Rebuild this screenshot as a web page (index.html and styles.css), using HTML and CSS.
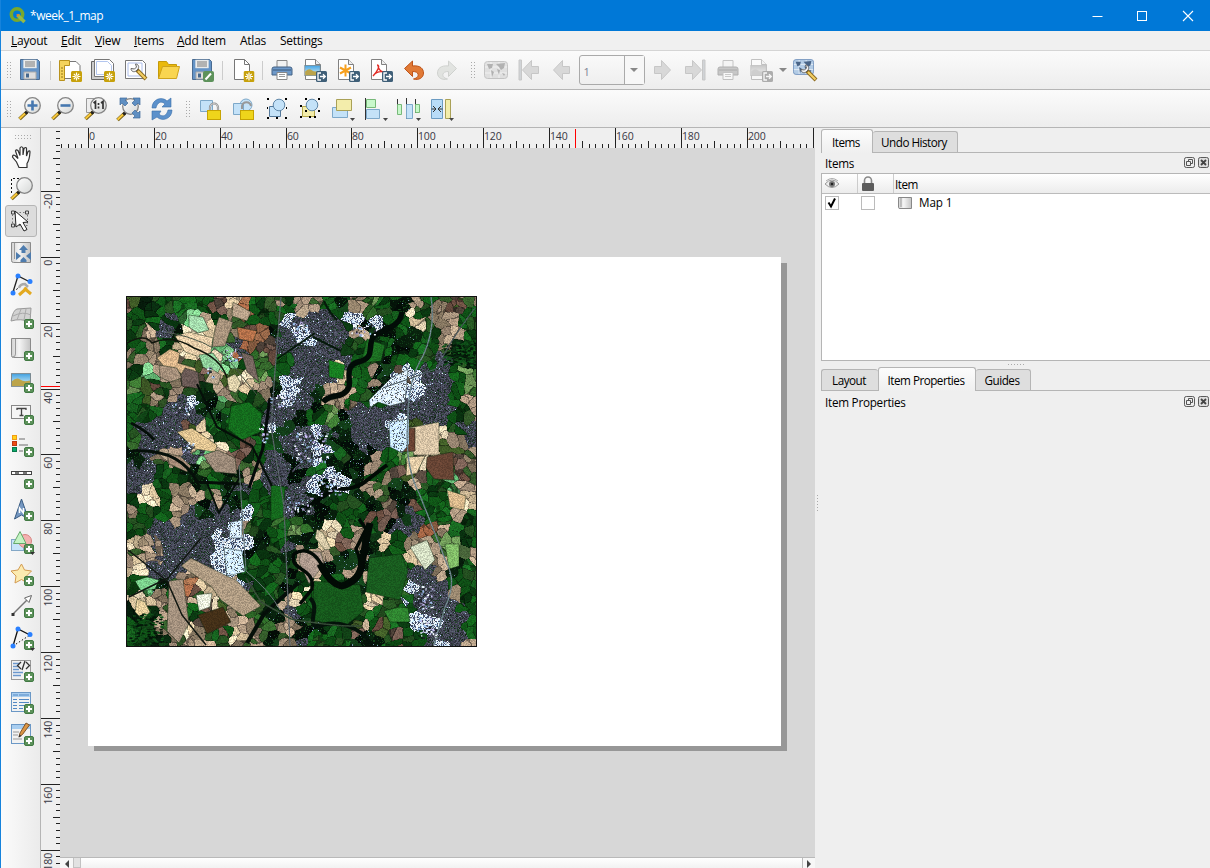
FILE: index.html
```
<!DOCTYPE html>
<html lang="en">
<head>
<meta charset="utf-8">
<title>*week_1_map</title>
<link rel="stylesheet" href="styles.css">
</head>
<body>
<svg class="defs" width="0" height="0">
  <defs>
    <linearGradient id="glass" x1="0" y1="0" x2="1" y2="1"><stop offset="0" stop-color="#fff"/><stop offset="1" stop-color="#d5d7d6"/></linearGradient>
    <linearGradient id="silver" x1="0" y1="0" x2="1" y2="0"><stop offset="0" stop-color="#d2d2d2"/><stop offset=".4" stop-color="#f5f5f5"/><stop offset="1" stop-color="#c4c4c4"/></linearGradient>
    <linearGradient id="sky" x1="0" y1="0" x2="0" y2="1"><stop offset="0" stop-color="#3fa2e4"/><stop offset=".6" stop-color="#a5d5ef"/></linearGradient>
    <symbol id="plus" viewBox="0 0 10 10"><rect x=".5" y=".5" width="9" height="9" rx="1.5" fill="#5d925b" stroke="#417943"/><path d="M5 2v6M2 5h6" stroke="#fff" stroke-width="2"/></symbol>
    <symbol id="star" viewBox="0 0 11 11"><rect width="11" height="11" rx="1.5" fill="#c7a10b"/><path d="M5.5 1.5v8M1.5 5.5h8M2.8 2.8l5.4 5.4M8.2 2.8l-5.4 5.4" stroke="#fff" stroke-width="1.2"/><circle cx="5.5" cy="5.5" r="1.4" fill="#f5df8b"/></symbol>
    <symbol id="export" viewBox="0 0 11 11"><rect width="11" height="11" rx="1.5" fill="#3f5f78"/><path d="M5 2H2v7h3M4 5.500h5M7 3.300l2.300 2.200L7 7.700" fill="none" stroke="#fff" stroke-width="1.300"/></symbol>
    <symbol id="lens" viewBox="0 0 24 24"><path d="M9 15l-7.500 7" stroke="#6c5610" stroke-width="3.600"/><path d="M7 16.500l-5.500 5.200" stroke="#f7c83d" stroke-width="2.200"/><path d="M10 14l-2.500 2.500" stroke="#222" stroke-width="3"/><circle cx="14.500" cy="8.500" r="7.800" fill="url(#glass)" stroke="#858585" stroke-width="1.300"/></symbol>
    <symbol id="page" viewBox="0 0 24 24"><path d="M4.500 1.500h10l5 5v15h-15z" fill="#fff" stroke="#818181"/><path d="M14.500 1.500v5h5" fill="#eee" stroke="#818181"/></symbol>
    <symbol id="wrench" viewBox="0 0 24 24"><path d="M13 12l9 9" stroke="#8b6a1e" stroke-width="4"/><path d="M14 13l7.500 7.500" stroke="#f3ce62" stroke-width="2.200"/><path d="M7 10.500c0 3 3 4 5 2.500l2-2c1.500-2 .5-5-2.500-5l1 3-2 2z" fill="#f4f4f4" stroke="#666"/></symbol>
    <symbol id="printer" viewBox="0 0 24 24"><path d="M7 2.500h10V10H7z" fill="#f2f2f2" stroke="#888"/><path d="M4 9h16q2 0 2 2v6H2v-6q0-2 2-2z" fill="#6e99c9" stroke="#446284"/><path d="M3 12h18" stroke="#385776"/><path d="M7 14.500h10v7H7z" fill="#fff" stroke="#888"/><path d="M9 16.500h6M9 18.500h6" stroke="#999"/></symbol>
    <symbol id="floppy" viewBox="0 0 24 24"><path d="M2.500 1.500h17l2 2v18h-19z" fill="#6594c7" stroke="#496b91"/><path d="M5.500 2h13v8h-13z" fill="#eee" stroke="#d2d8de" stroke-width=".5"/><path d="M7 4h10M7 6h10M7 8h10" stroke="#777"/><path d="M6 14h12v7H6z" fill="#dedede" stroke="#aaa"/><path d="M8 15.500h3v4H8z" fill="#45688f"/></symbol>
    <symbol id="arrow" viewBox="0 0 24 24"><path d="M3.500 12l9-9.500v6h7v7h-7v6z" fill="#cfcfcf" stroke="#b8b8b8"/></symbol>
    <symbol id="padlock" viewBox="0 0 14 18"><path d="M3 9V5.500a4 4 0 018 0V9" fill="none" stroke="#888" stroke-width="2.200"/><path d="M3 9V5.500a4 4 0 018 0V9" fill="none" stroke="#ddd" stroke-width=".8"/><rect x=".5" y="8.500" width="13" height="9" fill="#efd51b" stroke="#c7a403"/></symbol>
    <symbol id="world" viewBox="0 0 24 20"><rect x=".5" y="1.500" width="23" height="17" rx="3" fill="#b3cce6" stroke="#7191bb"/><path d="M1 7h22M1 13h22M7 2v16M15 2v16" stroke="#fff" stroke-width=".7"/><path d="M3 4h6l-1 4-3 1zM7 10l3 2-2 5zM12 4l9-1-1 5-3 2-2-3zM13 9l3 1-1 5zM18 13l3 1-1 2z" fill="#496487"/></symbol>
    <symbol id="photo" viewBox="0 0 22 15"><rect x=".5" y=".5" width="21" height="14" fill="url(#sky)" stroke="#768288"/><path d="M1 9q5-5 9-2t11 1v6H1z" fill="#bca44a"/></symbol>
    <symbol id="float" viewBox="0 0 12 12"><rect x=".5" y=".5" width="10" height="10" rx="1.800" fill="#eee" stroke="#5b5b5b"/><path d="M4.500 4V2.500h4v4H7M2.500 4.500h4v4h-4z" fill="none" stroke="#555"/></symbol>
    <symbol id="cross" viewBox="0 0 12 12"><rect x=".5" y=".5" width="10" height="10" rx="1.800" fill="#ddd" stroke="#5b5b5b"/><path d="M3 3l5 5M8 3L3 8" stroke="#444" stroke-width="1.800"/></symbol>
  </defs>
</svg>
<div class="window">
  <header class="titlebar">
    <svg class="logo" viewBox="0 0 17 17"><circle cx="8" cy="7.500" r="5.700" fill="none" stroke="#77a82e" stroke-width="3.500"/><path d="M8.500 8l7 7" stroke="#97b945" stroke-width="3.500"/><path d="M7.500 7l3.500.5L8 10z" fill="#ef7f20"/></svg>
    <span class="title">*week_1_map</span>
    <svg class="winbtns" viewBox="0 0 138 30"><path d="M20.500 15.500h10" stroke="#fff"/><rect x="65.500" y="10.500" width="9" height="9" fill="none" stroke="#fff"/><path d="M111 10l10 10M121 10l-10 10" stroke="#fff" stroke-width="1.100"/></svg>
  </header>
  <nav class="menubar">
    <span class="m1"><u>L</u>ayout</span><span class="m2"><u>E</u>dit</span><span class="m3"><u>V</u>iew</span><span class="m4"><u>I</u>tems</span><span class="m5"><u>A</u>dd Item</span><span class="m6">Atlas</span><span class="m7">Settings</span>
  </nav>
  <div class="toolbar first">
    <i class="grip"></i>
    <b class="btn"><svg viewBox="0 0 24 24"><use href="#floppy"/></svg></b>
    <i class="sep s7"></i>
    <b class="btn"><svg viewBox="0 0 24 24"><path d="M5 3.500h13l4 4v13H5z" fill="#fff" stroke="#777"/><path d="M1.500 2.500h10v5h-5v15h-5z" fill="#f4d35c" stroke="#b9921c"/><path d="M3 10h2M3 13h2M3 16h2M3 19h2" stroke="#947617"/><use href="#star" x="13" y="13" width="11" height="11"/></svg></b>
    <b class="btn"><svg viewBox="0 0 24 24"><path d="M.5 3.500v18h15v-18z" fill="#ccc" stroke="#666"/><path d="M3.500 1.500h15l4 4v13h-19z" fill="#fff" stroke="#777"/><path d="M5.500 3.500h11l4 4v9h-15z" fill="none" stroke="#b3c6ef"/><use href="#star" x="13" y="13" width="11" height="11"/></svg></b>
    <b class="btn"><svg viewBox="0 0 24 24"><path d="M1.500 2.500h17l3 3v15h-20z" fill="#fff" stroke="#777"/><path d="M4 5h14v13H4z" fill="none" stroke="#aebfeb"/><use href="#wrench" width="24" height="24"/></svg></b>
    <b class="btn"><svg viewBox="0 0 24 24"><path d="M1.500 20.500v-17h8l2 3h8v3" fill="#eab90b" stroke="#c49a0b"/><path d="M1.500 20.500l4-12h17l-3 12z" fill="#f9d550" stroke="#cfa31c"/></svg></b>
    <b class="btn"><svg viewBox="0 0 24 24"><use href="#floppy"/><rect x="13" y="13" width="11" height="11" rx="2" fill="#5d925b"/><path d="M15.500 21.500l5.500-6" stroke="#fff" stroke-width="2"/></svg></b>
    <i class="sep s8"></i>
    <b class="btn"><svg viewBox="0 0 24 24"><path d="M3.500 1.500h10l5 5v15h-15z" fill="#fff" stroke="#777"/><path d="M13.500 1.500v5h5" fill="none" stroke="#777"/><use href="#star" x="12.500" y="13" width="11" height="11"/></svg></b>
    <i class="sep s6"></i>
    <b class="btn"><svg viewBox="0 0 24 24"><use href="#printer"/></svg></b>
    <b class="btn"><svg viewBox="0 0 24 24"><use href="#page" x="-2"/><use href="#photo" x="1" y="7" width="17" height="11"/><use href="#export" x="13" y="13" width="11" height="11"/></svg></b>
    <b class="btn"><svg viewBox="0 0 24 24"><use href="#page" x="-2"/><path d="M9.500 6.500v12M4 9.500l11 6M15 9.500l-11 6" stroke="#f7a01d" stroke-width="2"/><use href="#export" x="13" y="13" width="11" height="11"/></svg></b>
    <b class="btn"><svg viewBox="0 0 24 24"><use href="#page" x="-2"/><path d="M8 7c4 0 0 7-4 11 3-4 7-5 11-4-4 0-6-4-6-7" fill="none" stroke="#e22b24" stroke-width="1.400"/><use href="#export" x="13" y="13" width="11" height="11"/></svg></b>
    <b class="btn"><svg viewBox="0 0 24 24"><path d="M2.500 10.500l8-7.500v5c8-1 11 3 11 7 0 5-5 7.500-10 6 4-1 5-3 4.500-5-.5-1.500-2-2.500-5.500-2.500v5z" fill="#e17a36" stroke="#be541a"/></svg></b>
    <b class="btn"><svg class="dim" viewBox="0 0 24 24"><path d="M21.500 10.500l-8-7.500v5c-8-1-11 3-11 7 0 5 5 7.500 10 6-4-1-5-3-4.500-5 .5-1.500 2-2.500 5.500-2.500v5z" fill="#ccd0ca" stroke="#a3a8a2"/></svg></b>
    <i class="grip wide"></i>
    <b class="btn"><svg class="dim gray" viewBox="0 0 24 24"><use href="#world" y="2" width="24" height="20"/></svg></b>
    <b class="btn"><svg class="pale" viewBox="0 0 24 24"><path d="M2 2h2.500v20H2z" fill="#c5c9cd" stroke="#b9b9b9"/><use href="#arrow" x="2"/></svg></b>
    <b class="btn"><svg class="pale" viewBox="0 0 24 24"><use href="#arrow"/></svg></b>
    <div class="combo"><span>1</span><em></em></div>
    <b class="btn"><svg class="pale flip" viewBox="0 0 24 24"><use href="#arrow"/></svg></b>
    <b class="btn"><svg class="pale flip" viewBox="0 0 24 24"><path d="M2 2h2.500v20H2z" fill="#c5c9cd" stroke="#b9b9b9"/><use href="#arrow" x="2"/></svg></b>
    <b class="btn"><svg class="dim gray" viewBox="0 0 24 24"><use href="#printer"/></svg></b>
    <b class="btn"><svg class="dim gray" viewBox="0 0 24 24"><use href="#page" x="-2"/><use href="#photo" x="1" y="7" width="17" height="11"/><use href="#export" x="13" y="13" width="11" height="11"/></svg></b>
    <i class="drop"></i>
    <b class="btn"><svg viewBox="0 0 24 24"><use href="#world" y="0" width="21" height="18"/><use href="#wrench" x="1" y="1" width="24" height="24"/></svg></b>
  </div>
  <div class="toolbar second">
    <i class="grip"></i>
    <b class="btn"><svg viewBox="0 0 24 24"><use href="#lens"/><path d="M14.500 3.500v10M9.500 8.500h10" stroke="#4678b0" stroke-width="2.600"/></svg></b>
    <b class="btn"><svg viewBox="0 0 24 24"><use href="#lens"/><path d="M9.500 8.500h10" stroke="#4678b0" stroke-width="2.600"/></svg></b>
    <b class="btn"><svg viewBox="0 0 24 24"><path d="M2.500 1.500h12v14h-12z" fill="#eee" stroke="#999"/><use href="#lens"/><path d="M9.500 6l2-1.500V12M17 6l2-1.500V12M14.500 6v2M14.500 9.500v2" fill="none" stroke="#333" stroke-width="1.700"/></svg></b>
    <b class="btn"><svg viewBox="0 0 24 24"><use href="#lens" x="-1" y="1"/><path d="M3 1h7L8 3l3 3-3 3-3-3-2 2zM23 1v7l-2-2-3 3-3-3 3-3-2-2zM23 21v-7l-2 2-3-3-3 3 3 3-2 2z" fill="#5f8fc2" stroke="#416b9c" stroke-width=".7"/></svg></b>
    <b class="btn"><svg viewBox="0 0 24 24"><path d="M2 11c0-9 10-12 15-7l4-3v9h-9l3-3c-4-4-8-1-9 4z" fill="#5c91cb" stroke="#3a6ea9" stroke-width=".6"/><path d="M22 13c0 9-10 12-15 7l-5 3v-9h9l-2 3c4 4 8 1 9-4z" fill="#5c91cb" stroke="#3a6ea9" stroke-width=".6"/></svg></b>
    <i class="grip wide"></i>
    <b class="btn"><svg viewBox="0 0 24 24"><path d="M1.500 3.500h12v11h-12z" fill="#c4e2f8" stroke="#7da8c9"/><use href="#padlock" x="8" y="5" width="14" height="18"/></svg></b>
    <b class="btn"><svg viewBox="0 0 24 24"><circle cx="14" cy="8" r="6" fill="#c4e2f8" stroke="#7da8c9"/><path d="M1.500 6.500h10v11h-10z" fill="#c4e2f8" stroke="#7da8c9"/><path d="M10 12V9c1-5 8-5 9 0" fill="none" stroke="#999" stroke-width="2"/><rect x="8.500" y="13.500" width="13" height="9" fill="#efd51b" stroke="#c7a403"/></svg></b>
    <b class="btn"><svg viewBox="0 0 24 24"><path d="M4.500 9.500h11v10h-11z" fill="#c4e2f8" stroke="#54799b"/><circle cx="14" cy="8" r="5.800" fill="#c4e2f8" stroke="#6087a8"/><path d="M2 2h2M20 2h2M2 21h2M11 21h2M20 21h2M2 11h1M21 11h1" stroke="#000" stroke-width="2"/></svg></b>
    <b class="btn"><svg viewBox="0 0 24 24"><path d="M4.500 9.500h12v10h-12z" fill="#f3edab" stroke="#b5a94c"/><circle cx="14" cy="8" r="5.800" fill="#c4e2f8" stroke="#6087a8"/><path d="M7 2h2M20 2h2M2 9h2M2 20h2M11 20h2M20 14h2M7 14h2M16 20h2" stroke="#000" stroke-width="2"/></svg></b>
    <b class="btn"><svg viewBox="0 0 24 24"><path d="M1.500 10.500h15v10h-15z" fill="#c4e2f8" stroke="#7da8c9"/><path d="M5.500 2.500h15v11h-15z" fill="#f3edab" stroke="#aaa157"/><path d="M19 21h5l-2.500 3z" fill="#444"/></svg></b>
    <b class="btn"><svg viewBox="0 0 24 24"><path d="M1.500 1v22" stroke="#333"/><path d="M2.500 2.500h9v8h-9z" fill="#c8f8cb" stroke="#78b97a"/><path d="M2.500 12.500h13v9h-13z" fill="#c4e2f8" stroke="#7da8c9"/><path d="M19 21h5l-2.500 3z" fill="#444"/></svg></b>
    <b class="btn"><svg viewBox="0 0 24 24"><path d="M.5 2v14M9.500 1v21M18.500 2v14" stroke="#333"/><path d="M.5 7.500h4v10h-4zM18.500 7.500h4v8h-4z" fill="#c8f8cb" stroke="#78b97a"/><path d="M9.500 7.500h6v14h-6z" fill="#c4e2f8" stroke="#7da8c9"/><path d="M19 21h5l-2.500 3z" fill="#444"/></svg></b>
    <b class="btn"><svg viewBox="0 0 24 24"><path d="M1.500 2.500h11v19h-11z" fill="#b8dcf8" stroke="#6b9bc2"/><path d="M15.500 2.500h5v19h-5z" fill="#f3edab" stroke="#aaa157"/><path d="M1.500 12h4M3 9l3 3-3 3M12.500 12h-4M11 9l-3 3 3 3" fill="none" stroke="#333"/><path d="M19 21h5l-2.500 3z" fill="#444"/></svg></b>
  </div>
  <main class="work">
    <aside class="tools">
      <i class="hgrip"></i>
      <b class="tool"><svg viewBox="0 0 24 24"><path d="M9 22.500L6.500 17 2.500 12q0-2.500 2.500-1.500l3 3L5.500 6q.5-2 2.500-.5l2 5V3q1.500-2.500 3 0v7l1-6.500q2-2 2.500 0V11l1.500-4.500q2-1.500 2 .5-.5 8-3 11.500v4z" fill="#fff" stroke="#333" stroke-width="1.200"/></svg></b>
      <b class="tool"><svg viewBox="0 0 24 24"><path d="M1.500 16V1.500H17" fill="none" stroke="#111" stroke-dasharray="2 2"/><use href="#lens"/></svg></b>
      <b class="tool active"><svg viewBox="0 0 24 24"><path d="M2.500 3.500h15v13h-15z" fill="none" stroke="#777" stroke-dasharray="1.500 2"/><path d="M1.500 2h3v3h-3zM15.500 2h3v3h-3zM1.500 15h3v3h-3z" fill="#ddd" stroke="#444"/><path d="M5 2l1 16 4-3 4 7 3-1.500-4-7 5-.5z" fill="#fff" stroke="#222"/></svg></b>
      <b class="tool"><svg viewBox="0 0 24 24"><path d="M1.500 1.500h19v20h-17q-2 0-2-2z" fill="url(#silver)" stroke="#8b8b8b"/><path d="M4.500 2v16" stroke="#999"/><path d="M13.500 4l4.500 5h-2.500v3h-4V9H9zM6 11l5 4-5 4zM21 11l-5 4 5 4zM13.500 16l3 3v2h-6v-2z" fill="#4e7cae"/></svg></b>
      <b class="tool"><svg viewBox="0 0 24 24"><path d="M3 19L8 3l12 6" fill="none" stroke="#222" stroke-width="1.300"/><path d="M3 19l8-6" stroke="#222" stroke-dasharray="2 2"/><path d="M9 22l8-7M14 15l7 6" stroke="#e3a920" stroke-width="3"/><path d="M9 15q1-4 6-4l3 3" fill="none" stroke="#aaa" stroke-width="2.500"/><circle cx="8" cy="3" r="2.500" fill="#2a80ff"/><circle cx="20" cy="8.500" r="2.500" fill="#2a80ff"/><circle cx="3" cy="20" r="2.500" fill="#2a80ff"/></svg></b>
      <b class="tool"><svg viewBox="0 0 24 24"><path d="M1 16q2-11 6-12l14-1-1 14q-9-4-19-1z" fill="#d2d2d2" stroke="#999"/><path d="M3 11q10-5 18-1M7 15l4-11M14 15l2-11" fill="none" stroke="#aaa"/><use href="#plus" x="14" y="14" width="10" height="10"/></svg></b>
      <b class="tool"><svg viewBox="0 0 24 24"><path d="M1.500 1.500h19v19h-17q-2 0-2-2z" fill="url(#silver)" stroke="#8b8b8b"/><path d="M5.500 2v15q0 3-3 3" fill="none" stroke="#999"/><use href="#plus" x="14" y="14" width="10" height="10"/></svg></b>
      <b class="tool"><svg viewBox="0 0 24 24"><use href="#photo" x="1" y="4" width="20" height="14"/><use href="#plus" x="14" y="14" width="10" height="10"/></svg></b>
      <b class="tool"><svg viewBox="0 0 24 24"><rect x="1.500" y="4.500" width="19" height="13" fill="#f6f6f6" stroke="#888"/><path d="M7 9V7.500h9V9M11.500 7.500v7M9.500 14.500h4" fill="none" stroke="#444" stroke-width="1.300"/><use href="#plus" x="14" y="14" width="10" height="10"/></svg></b>
      <b class="tool"><svg viewBox="0 0 24 24"><rect x="2.500" y="2.500" width="4" height="4" fill="#ffd31a" stroke="#f19b13"/><rect x="2.500" y="8.500" width="4" height="4" fill="#ef4c16" stroke="#bc3913"/><rect x="2.500" y="14.500" width="4" height="4" fill="#09a86c" stroke="#087849"/><path d="M9 6h6M9 12h9M9 18h4" stroke="#999" stroke-width="1.500"/><use href="#plus" x="14" y="14" width="10" height="10"/></svg></b>
      <b class="tool"><svg viewBox="0 0 24 24"><rect x="1.500" y="6.500" width="20" height="3" fill="#fff" stroke="#444"/><path d="M5 8h4M13 8h4" stroke="#777" stroke-width="2"/><use href="#plus" x="14" y="14" width="10" height="10"/></svg></b>
      <b class="tool"><svg viewBox="0 0 24 24"><path d="M11.500 1l7 20-7-4-7 4z" fill="#7598c2" stroke="#385b82"/><path d="M9.500 15v-5l4 5v-5" stroke="#fff" fill="none" stroke-width="1.500"/><use href="#plus" x="14" y="13" width="10" height="10"/></svg></b>
      <b class="tool"><svg viewBox="0 0 24 24"><rect x="1.500" y="9.500" width="12" height="11" fill="#c8e4f9" stroke="#84a8c7"/><circle cx="15" cy="11" r="6.500" fill="#f3b2b1" stroke="#d78380"/><path d="M10 1.500l6 12H3.500z" fill="#c4f4c4" stroke="#67a96b"/><use href="#plus" x="14" y="14" width="10" height="10"/><path d="M20 22h5l-2.500 3z" fill="#333"/></svg></b>
      <b class="tool"><svg viewBox="0 0 24 24"><path d="M11.500 2l3 6 7 1-5 5 1 7-6-3.500L5 21l1-7-5-5 7-1z" fill="#fcebb0" stroke="#d39b51"/><use href="#plus" x="14" y="14" width="10" height="10"/></svg></b>
      <b class="tool"><svg viewBox="0 0 24 24"><path d="M3 20L18 5" stroke="#777" stroke-width="1.400"/><path d="M21.500 1.500l-7 2.500 4.500 4.500z" fill="#fff" stroke="#666"/><path d="M1.500 19h3v3h-3z" fill="#333"/><use href="#plus" x="14" y="14" width="10" height="10"/></svg></b>
      <b class="tool"><svg viewBox="0 0 24 24"><path d="M3 20L8 3l12 6" fill="none" stroke="#111" stroke-width="1.300"/><path d="M3 20L20 9" stroke="#111" stroke-dasharray="1.500 2"/><circle cx="8" cy="3" r="2.500" fill="#2a80ff"/><circle cx="20" cy="8.500" r="2.500" fill="#2a80ff"/><circle cx="3" cy="20" r="2.500" fill="#2a80ff"/><use href="#plus" x="14" y="14" width="10" height="10"/><path d="M20 22h5l-2.500 3z" fill="#333"/></svg></b>
      <b class="tool"><svg viewBox="0 0 24 24"><rect x="1.500" y="2.500" width="19" height="19" fill="#f2f2f2" stroke="#999"/><path d="M3 5.500h7M3 8.500h5M3 11.500h6M3 14.500h10M3 17.500h8" stroke="#6b98cd" stroke-width="1.500"/><path d="M11 4L7.500 7.500 11 11M16 4l3.500 3.500L16 11M15 3l-3 9" fill="none" stroke="#333" stroke-width="1.300"/><use href="#plus" x="14" y="14" width="10" height="10"/></svg></b>
      <b class="tool"><svg viewBox="0 0 24 24"><rect x="1.500" y="2.500" width="19" height="19" fill="#f2f2f2" stroke="#6b98c6"/><path d="M2 5h18" stroke="#a9cef0" stroke-width="4"/><path d="M3 5h5M9 5h10M3 9.500h4M9 9.500h10M3 12.500h4M9 12.500h10M3 15.500h4M9 15.500h8M3 18.500h4M9 18.500h4" stroke="#5389c4"/><use href="#plus" x="14" y="14" width="10" height="10"/></svg></b>
      <b class="tool"><svg viewBox="0 0 24 24"><rect x="1.500" y="2.500" width="19" height="19" fill="#f2f2f2" stroke="#6b98c6"/><path d="M2 5h18" stroke="#a9cef0" stroke-width="4"/><path d="M3 10h6M3 13h5M3 17h9" stroke="#999"/><path d="M9 15l1-4 6-10 3.500 2-7 9.500z" fill="#db9544" stroke="#80552a"/><path d="M8.500 15.500l1-3 2 1.500z" fill="#333"/><use href="#plus" x="14" y="14" width="10" height="10"/></svg></b>
    </aside>
    <div class="vruler"><svg id="vruler" width="19" height="740"></svg></div>
    <section class="view">
      <svg id="hruler" class="hruler" width="755" height="20"></svg>
      <div class="scene"><div class="sheet"><canvas id="map" class="map" width="349" height="349"></canvas></div></div>
      <div class="scroll"><i class="arr left"></i><i class="thumb"></i><i class="arr right"></i></div>
    </section>
    <i class="splitter"></i>
    <section class="docks">
      <div class="tabs top"><span class="tab on t-items">Items</span><span class="tab t-undo">Undo History</span></div>
      <div class="dockhead"><span>Items</span><svg viewBox="0 0 12 12"><use href="#float"/></svg><svg viewBox="0 0 12 12"><use href="#cross"/></svg></div>
      <div class="tree">
        <div class="thead">
          <span class="c1"><svg width="16" height="12" viewBox="0 0 16 12"><path d="M1 6q7-8 14 0-7 7-14 0z" fill="#eee" stroke="#999"/><circle cx="8" cy="6" r="3" fill="#777"/><circle cx="8" cy="6" r="1.300" fill="#222"/><path d="M2 3q6-5 12 0" fill="none" stroke="#aaa"/></svg></span>
          <span class="c2"><svg width="12" height="15" viewBox="0 0 12 15"><path d="M2.500 8V4.500a3.500 3.500 0 017 0V8" fill="none" stroke="#888" stroke-width="1.600"/><rect y="7" width="12" height="8" rx="1" fill="#5c5c5c"/></svg></span>
          <span class="c3">Item</span>
        </div>
        <div class="trow"><span class="check"><svg width="12" height="12" viewBox="0 0 12 12"><path d="M2.500 5.500l2.500 4 4-8" fill="none" stroke="#000" stroke-width="2"/></svg></span><span class="check second-check"></span><svg class="mapicon" viewBox="0 0 14 12"><path d="M.5.500h13v11H2q-1.500 0-1.500-1z" fill="url(#silver)" stroke="#888"/><path d="M3 1v9" stroke="#999"/></svg><span class="name">Map 1</span></div>
      </div>
      <div class="hsplit"><i></i></div>
      <div class="tabs bottom"><span class="tab t-layout">Layout</span><span class="tab on t-props">Item Properties</span><span class="tab t-guides">Guides</span></div>
      <div class="dockhead props"><span>Item Properties</span><svg viewBox="0 0 12 12"><use href="#float"/></svg><svg viewBox="0 0 12 12"><use href="#cross"/></svg></div>
    </section>
  </main>
</div>
<script src="map.js"></script>
</body>
</html>
```
FILE: styles.css
```
* { box-sizing: border-box; }
body { margin: 0; overflow: hidden; font: 12px "Open Sans", "Noto Sans", sans-serif; letter-spacing: -0.25px; color: #000; }
.defs { position: absolute; }
.window { width: 1210px; height: 868px; display: flex; flex-direction: column; background: #efefef; border-left: 1px solid #1683dc; }
.titlebar { height: 31px; flex: none; display: flex; align-items: center; background: #0078d7; color: #fff; padding-left: 8px; }
.logo { width: 17px; height: 17px; }
.title { margin-left: 4px; flex: 1; letter-spacing: -0.45px; }
.winbtns { width: 138px; height: 30px; flex: none; }
.menubar { height: 20px; flex: none; display: flex; align-items: center; padding-left: 10px; border-bottom: 1px solid #d5d5d5; background: #f0f0f0; white-space: nowrap; }
.menubar u { text-underline-offset: 1px; }
.m1 { width: 50px; } .m2 { width: 34px; } .m3 { width: 39px; } .m4 { width: 43px; } .m5 { width: 63px; } .m6 { width: 40px; }
.toolbar { flex: none; display: flex; align-items: center; padding-left: 5px; background: linear-gradient(#fbfbfb, #ededed); border-bottom: 1px solid #b5b5b5; }
.first { height: 39px; }
.second { height: 38px; }
.grip { width: 7.500px; height: 18px; flex: none; background: radial-gradient(circle, #aaa 0.700px, transparent 0.900px) 0 0 / 3px 3px repeat; clip-path: inset(0 2px 0 0); }
.grip.wide { width: 6px; margin: 0 4px 0 6px; clip-path: none; }
.btn { width: 33px; height: 24px; flex: none; display: flex; justify-content: center; }
.btn svg, .tool svg { width: 24px; height: 24px; overflow: visible; display: block; }
.btn svg { width: 24px; height: 24px; margin-left: -1px; }
.dim { opacity: .45; }
.pale { opacity: .75; }
.gray { filter: grayscale(1); }
.flip { transform: scaleX(-1); }
.sep { height: 19px; flex: none; background: linear-gradient(#ccc, #ccc) center / 1px 100% no-repeat; }
.s7 { width: 7px; } .s8 { width: 8px; } .s6 { width: 6px; }
.combo { width: 66px; height: 30px; margin-right: 1px; flex: none; display: flex; border: 1px solid #aaa; border-radius: 3px; color: #7b8192; align-items: center; font-size: 11px; }
.combo span { flex: 1; padding: 2px 0 0 4px; }
.combo em { width: 20px; height: 28px; border-left: 1px solid #aaa; display: flex; justify-content: center; align-items: center; background: #f7f7f7; }
.combo em::after, .drop::after { content: ""; border: 4px solid transparent; border-top-color: #888; border-bottom: 0; }
.drop { width: 11px; flex: none; display: flex; justify-content: center; }
.work { flex: 1; min-height: 0; display: flex; }
.tools { width: 40px; flex: none; background: linear-gradient(90deg, #fbfbfb, #ebebeb); border-right: 1px solid #b5b5b5; padding: 6px 0 0 4px; overflow: hidden; }
.hgrip { display: block; width: 18px; height: 6px; margin: 0 0 1px 9px; background: radial-gradient(circle, #aaa 0.700px, transparent 0.900px) 0 0 / 3px 3px; }
.tool { width: 32px; height: 32px; margin-bottom: 0.060px; display: flex; justify-content: center; align-items: center; }
.tool svg { margin-left: 1px; }
.tool.active { background: #dcdcdc; border: 1px solid #b5b5b5; border-radius: 3px; }
.vruler { width: 19px; flex: none; background: #efefef; overflow: hidden; }
.vruler svg { display: block; }
.view { width: 755px; flex: none; display: flex; flex-direction: column; }
.hruler { display: block; flex: none; background: #efefef; }
.tick { stroke: #222; stroke-width: 1; shape-rendering: crispEdges; }
.mark { stroke: #f00; stroke-width: 1; shape-rendering: crispEdges; }
.num { font: 10.500px "Open Sans", sans-serif; fill: #383844; letter-spacing: -0.150px; }
.scene { position: relative; flex: 1; background: #d7d7d7; overflow: hidden; }
.sheet { position: absolute; left: 28px; top: 109px; width: 693px; height: 489px; background: #fff; box-shadow: 6px 5px 0 #979797; }
.sheet::after { content: ""; position: absolute; right: -6px; top: 0; width: 6px; height: 6px; background: #d7d7d7; }
.map { position: absolute; left: 38px; top: 39px; width: 351px; height: 351px; border: 1px solid #111; }
.scroll { height: 11px; flex: none; display: flex; background: linear-gradient(#fff, #f2f2f2); border-top: 1px solid #b9b9b9; }
.arr { width: 13px; display: flex; align-items: center; justify-content: center; background: #f7f7f7; }
.arr::after { content: ""; margin-top: 2px; border: 4px solid transparent; }
.left::after { border-right-color: #444; border-left: 0; }
.right { margin-left: auto; border-left: 1px solid #bbb; }
.right::after { border-left-color: #444; border-right: 0; }
.thumb { width: 8px; background: #e2e2e2; border: 1px solid #c2c2c2; border-top: 0; }
.splitter { width: 6px; flex: none; background: radial-gradient(circle, #aaa 0.700px, transparent 0.900px) 1px 366px / 3px 3px; clip-path: inset(366px 2px 356px 1px); }
.docks { flex: 1; min-width: 0; display: flex; flex-direction: column; letter-spacing: -0.5px; font-size: 11.700px; }
.tabs { display: flex; align-items: flex-end; flex: none; border-bottom: 1px solid #b5b5b5; }
.top { height: 25px; }
.tab { display: flex; align-items: center; justify-content: center; height: 21px; padding-right: 2px; background: #dedede; border: 1px solid #b5b5b5; border-bottom: 0; border-radius: 3px 3px 0 0; white-space: nowrap; }
.tab + .tab { border-left: 0; }
.tab.on { height: 24px; margin-bottom: -1px; background: linear-gradient(#fcfcfc, #efefef); border-left: 1px solid #b5b5b5; }
.t-items { width: 52px; } .t-undo { width: 85px; } .t-layout { width: 57px; border-right: 0; } .t-props { width: 98px; } .t-guides { width: 55px; }
.dockhead { height: 20px; flex: none; display: flex; align-items: center; padding-left: 4px; gap: 2px; }
.dockhead span { flex: 1; letter-spacing: -0.250px; }
.dockhead svg { width: 12px; height: 12px; }
.tree { height: 188px; flex: none; background: #fff; border: 1px solid #b5b5b5; border-right: 0; }
.thead { height: 20px; display: flex; background: linear-gradient(#fff, #ececec); border-bottom: 1px solid #bbb; }
.thead span { display: flex; align-items: center; }
.c1 { width: 36px; padding-left: 2px; border-right: 1px solid #ccc; }
.c2 { width: 36px; padding-left: 4px; border-right: 1px solid #ccc; }
.c3 { padding-left: 1px; }
.trow { display: flex; align-items: center; height: 18px; padding-left: 3px; letter-spacing: 0; }
.name { padding-bottom: 2px; letter-spacing: -0.1px; }
.check { width: 14px; height: 14px; border: 1px solid #bbb; display: block; background: #fff; }
.check svg { display: block; }
.second-check { margin-left: 22px; }
.mapicon { width: 14px; height: 12px; margin: 0 7px 0 23px; }
.hsplit { height: 6px; display: flex; justify-content: center; align-items: center; }
.hsplit i { width: 18px; height: 3px; background: radial-gradient(circle, #aaa 0.700px, transparent 0.900px) 0 0 / 3px 3px; }
.bottom { height: 24px; }
.props { height: 22px; }
```
FILE: map.js
```
const NS = 'http://www.w3.org/2000/svg';

function add(svg, name, attrs, text) {
  const el = document.createElementNS(NS, name);
  for (const k in attrs) el.setAttribute(k, attrs[k]);
  if (text !== undefined) el.textContent = text;
  svg.appendChild(el);
}

// Rulers: a tick every 2 mm, medium at 10 mm, long with a number at 20 mm
function ruler(id, origin, length, vertical, mark) {
  const svg = document.getElementById(id);
  const scale = 3.295;
  for (let mm = -60; mm <= 240; mm += 2) {
    const p = Math.floor(origin + mm * scale) + 0.5;
    if (p < 0 || p > length) continue;
    const len = mm % 20 === 0 ? 20 : mm % 10 === 0 ? 7 : 4;
    const edge = vertical ? 19 : 20;
    if (vertical) add(svg, 'line', { x1: edge - len, x2: edge, y1: p, y2: p, class: 'tick' });
    else add(svg, 'line', { x1: p, x2: p, y1: edge - len, y2: edge, class: 'tick' });
    if (mm % 20 === 0 && mm <= 200) {
      if (vertical) add(svg, 'text', { class: 'num', 'text-anchor': 'end', transform: `translate(11 ${p + 2.5}) rotate(-90)` }, mm);
      else add(svg, 'text', { class: 'num', x: p + 0.5, y: 12 }, mm);
    }
  }
  if (vertical) add(svg, 'line', { x1: 0, x2: 19, y1: mark, y2: mark, class: 'mark' });
  else add(svg, 'line', { x1: mark, x2: mark, y1: 1, y2: 20, class: 'mark' });
}
ruler('hruler', 28.3, 755, false, 515.5);
ruler('vruler', 129.2, 740, true, 258.5);

// Land cover: one letter per 14 px block, north at the top
const cover = [
  'bdggggbcogtgttgktlgktgtbt', 'gggumtgtoggwuuugwwggcgttg', 'gtukccttbokuwuuutkkgkgttg',
  'gtgcccmuobbuuuudgggkggtdg', 'tgtttbcmglbguuuuggkgggudd', 'gmttbbcbclgwuuucgtkbwuugl',
  'lbgtgdttctkwukttgkkwwuugl', 'gbtuwkmggguwukttgguuucugt', 'gguuukkggguukglkuuuwuuugt',
  'guuubcgggkwkuwukuuuwbccgu', 'luuuuccgbgkuuwkkkuuwcbbtu', 'kuttumtbdgukuwkgktgltcbbt',
  'uuggklgkttuukgwkkggbbgtbt', 'uugttkgkuguuuwkwkttktggmt', 'gcgttttkggguukgggktkbggcc',
  'tggtukuuwggukkkggbbkuggtg', 'gguuuuuwtglulkcgtgkuuotgg', 'ctuuuuwwwkgukkcbtkcgttllg',
  'ttuuuuwwkgkktttktkggcttlt', 'ctuutuwwgggdttkktkgguutkg', 'gmktocctuggkgcggkcglwuugg',
  'cctgbtcttggtcggggctgwuutg', 'ddttgbbtltkuggqkggggwuuug', 'gdttcbbgtlktkkgdbtbgwwuug',
  'ggdtttgcttktugggkkgbguwut'
];
const tones = {
  g: [[14, 78, 21], [18, 96, 26], [10, 56, 17], [24, 104, 33], [37, 82, 33], [14, 78, 21]],
  d: [[9, 43, 16], [16, 62, 21], [6, 28, 12]],
  k: [[3, 12, 7], [8, 32, 13], [5, 20, 9], [18, 62, 25]],
  t: [[164, 143, 122], [181, 160, 135], [137, 121, 99], [187, 163, 138], [52, 92, 42]],
  c: [[226, 204, 165], [205, 184, 149], [239, 222, 188]],
  b: [[106, 78, 65], [126, 99, 87], [83, 70, 60], [63, 90, 38]],
  o: [[176, 109, 74], [190, 128, 89], [145, 99, 70]],
  l: [[60, 118, 50], [109, 151, 87], [44, 100, 38]],
  m: [[103, 189, 119], [130, 207, 142], [48, 108, 52]],
  q: [[18, 82, 24]],
  u: [[70, 73, 88]], w: [[184, 210, 238]]
};
let seed = 71;
function rnd() {
  seed = (seed * 1664525 + 1013904223) >>> 0;
  return seed / 4294967296;
}

const size = 349;
const ctx = document.getElementById('map').getContext('2d');
const img = ctx.createImageData(size, size);
const step = 8.5;
const cols = Math.ceil(size / step) + 4;
const seeds = [];
for (let j = 0; j < cols; j++) for (let i = 0; i < cols; i++) {
  const x = (i - 2 + rnd() * 1.3) * step, y = (j - 2 + rnd() * 1.3) * step;
  const cx = Math.max(0, Math.min(24, Math.floor((x + rnd() * 6 - 3) / 14)));
  const cy = Math.max(0, Math.min(24, Math.floor((y + rnd() * 6 - 3) / 14)));
  const kind = cover[cy][cx] || 'g';
  const set = tones[kind];
  const c = set[Math.floor(rnd() * set.length)];
  const angle = 0.35 * Math.sin(x / 50) + 0.3 * Math.cos(y / 40);
  seeds.push({ x, y, kind, c, v: 0.88 + rnd() * 0.24, ca: Math.cos(angle), sa: Math.sin(angle), ax: 0.75 + rnd() * 0.5 });
}
for (let y = 0; y < size; y++) for (let x = 0; x < size; x++) {
  const wx = x + 1.5 * Math.sin(y / 9) + 0.8 * Math.sin(x / 4 + y / 5);
  const wy = y + 1.5 * Math.sin(x / 10) + 0.8 * Math.cos(y / 4 - x / 7);
  const gi = Math.floor(wx / step) + 2, gj = Math.floor(wy / step) + 2;
  let best = null, d1 = 1e9, d2 = 1e9;
  for (let j = Math.max(0, gj - 2); j <= Math.min(cols - 1, gj + 2); j++)
    for (let i = Math.max(0, gi - 2); i <= Math.min(cols - 1, gi + 2); i++) {
      const s = seeds[j * cols + i];
      const dx = wx - s.x, dy = wy - s.y;
      const u = Math.abs(dx * s.ca + dy * s.sa) * s.ax, v = Math.abs(dy * s.ca - dx * s.sa) / s.ax;
      const d = Math.max(u, v) + 0.25 * Math.min(u, v);
      if (d < d1) { d2 = d1; d1 = d; best = s; } else if (d < d2) d2 = d;
    }
  let f = best.v;
  let [r, g, b] = best.c;
  if (best.kind === 'u') {
    const t = rnd();
    if (t > 0.975) [r, g, b] = [160, 185, 215];
    else if (t < 0.14) [r, g, b] = [28, 58, 34];
    f = 0.6 + rnd() * 0.7;
  } else if (best.kind === 'w') {
    const t = rnd();
    if (t < 0.3) [r, g, b] = [72, 84, 112];
    else if (t > 0.6) [r, g, b] = [236, 246, 255];
    f = 0.85 + rnd() * 0.25;
  } else if (best.kind === 'k') {
    if (rnd() > 0.98) [r, g, b] = [120, 150, 175];
    else if (rnd() < 0.12) [r, g, b] = [18, 66, 25];
  } else if (d2 - d1 < 0.7) {
    f *= 0.62;
  }
  const o = (y * size + x) * 4;
  img.data[o] = r * f; img.data[o + 1] = g * f; img.data[o + 2] = b * f; img.data[o + 3] = 255;
}
ctx.putImageData(img, 0, 0);

function area(points, colour) {
  ctx.fillStyle = colour;
  ctx.fill(new Path2D(points));
  ctx.strokeStyle = 'rgba(10,30,12,.55)';
  ctx.lineWidth = 0.8;
  ctx.stroke(new Path2D(points));
}
function line(path, colour, width) {
  ctx.strokeStyle = colour;
  ctx.lineWidth = width;
  ctx.lineJoin = 'round';
  ctx.stroke(new Path2D(path));
}
// Large fields
area('M48 39l14-4 24 6-2 14-8 6-18-6z', '#e9cfaa');
area('M62 18l14 2 6 13-11 3-9-6z', '#a7dfb0');
area('M92 20l14 5-8 24-13 1 3-18z', '#a8937c');
area('M106 5l18 10-4 9-15-5z', '#b7a189');
area('M110 30l20 4-4 11-14-3z', '#b5714a');
area('M30 61l13-9 10 4-2 10 17 5 4 10-12 1-10-9-12-2z', '#dcb78c');
area('M32 68l18 3 5 10-12 4-10-5z', '#a7917c');
area('M54 78l4-7 13 4 2 17-18-3z', '#6b5a56');
area('M72 58l14-2 9 12-5 9-14-7z', '#8fd09b');
area('M78 85l7-13 9 6-3 10z', '#bca890');
area('M100 81l8-4 6 9-5 10-7-3z', '#ddd0aa');
area('M114 55l12 4 6 26-12-10z', '#75655e');
area('M50 135l15-4 25 17-2 7-20-3z', '#dfc391');
area('M76 158l15-5 17 8 2 16-22-2z', '#9b8978');
area('M40 156l14 4 10 9-4 6-18-8z', '#a68c78');
area('M104 109l18-4 13 12-2 18-18 8-14-11z', '#146d1d');
area('M281 131l31-6v33h-25z', '#d8c4a6');
area('M300 160l26-5 1 28-20-1-8-11z', '#674434');
area('M280 160l18-1-8 17-11 3z', '#e4cda8');
area('M288 131v23l-14 1v-23z', '#6b4334');
area('M263 82l18-10-3 33-15 4-12-4-8 6-1-8z', '#cddff3');
area('M262 125l20-3v25l-7 9-12-6z', '#bdd8f5');
area('M202 63l16 5-2 14-14-2z', '#188021');
area('M240 42l18 6-4 16-20 2z', '#1c6f22');
area('M71 318l25-8 8 15-24 12z', '#443018');
area('M257 314l15-4 9 1 2 14h-20z', '#2f8530');
area('M54 269l10-8 46 23 24 25-18 10-22-16-10-14z', '#b09c83');
area('M42 284l14-2 6 44-10 20-12-12z', '#a4917e');
area('M10 302l8 3 5 10-7 8-8-8z', '#e6ce9c');
area('M8 284l12-4 12 3-4 9-14 2z', '#7cd18d');
area('M69 298l16-2-2 14-11 4z', '#edf0de');
area('M187 284l46 4 4 26-20 16-32-7z', '#16591c');
area('M242 261l32-4 7 17-8 29-34-8z', '#195c1f');
area('M174 254l20 1 3 12-15 20-10-22z', '#ad998d');
area('M190 232l6 4 8 16-6 1-10-12z', '#d8caa8');
area('M97 251l18 3 3 21-18 4z', '#c3dcf4');
area('M104 225l11-2v18h-13z', '#c8def5');
area('M283 250l17-7 8 20-10 10z', '#d5dfc4');
area('M320 193l19 6-2 14-14-3z', '#d9b98c');
area('M318 247h14v22l-10 3z', '#82bd68');
area('M144 188l14 2-2 30-12 4z', '#15691d');
// Woodland rows east of the suburb and in the south-west
for (let k = 0; k < 240; k++) {
  const east = k < 120;
  ctx.fillStyle = k % 2 ? '#031508' : '#11551b';
  ctx.fillRect((east ? 315 : 2) + rnd() * 32, (east ? 44 : 316) + rnd() * (east ? 24 : 30), 3, 1.5);
}
// Rivers and wooded banks
line('M275 15c-2 17-21 17-28 24-8 10 3 22-16 26-14 4-7 18-9 25-6 13-19 6-26 15', '#020c07', 5.5);
line('M197 4q6 13 13 19M150 62l38-26M186 40l28 14', '#06180b', 2);
line('M232 222l7 10-10 20c10 19-1 34-14 36-14 0-14-13-25-27q-11-12-23-4c-6 17 22 13 18 35l-12 15', '#020a05', 3.5);
line('M243 226l-4 18-4 22q-1 17-20 23-12-2-22-22', '#020a05', 7);
line('M260 168l-25 19q-14 7-26 4l-33 22', '#020a05', 4);
line('M183 301c11 10-4 26 7 29 18-8 44-1 55 18', '#04120a', 4);
line('M120 346l17-29 34-31', '#050f09', 4);
line('M4 126q16 8 23 17M5 154q48-3 65 31l45 2', '#050f09', 3);
line('M70 87l20 43 35 19 20 40M80 186l12 30 22-38', '#050f09', 2);
line('M0 46q18-10 25 0 20-9 42 5 27 10 33 30', '#11160d', 1.5);
line('M1 253l39 31 15 34 24 30M2 300l39-19 33-40', '#101610', 1.5);
line('M143 101l-7 50-14 40', '#050a0a', 3);
// Roads and railway
line('M304 0q5 31-8 59-15 24-15 61-4 48 11 76l28 71q10 19-2 43l-11 38', '#6c838a', 1.4);
line('M348 11q-29 38-37 60l-24 9-31 11', '#49565c', 1.2);
line('M154 0q-6 70-10 130l13 80 6 139', '#596367', 1.2);
line('M112 168l4 62 3 44q24 20 34 39', '#667477', 1);
line('M40 35q41 8 60 26l30 37', '#4b5749', 1);
line('M119 281l15 24 30 17q44 8 70 7', '#354b36', 1.5);
// Industrial roofs in the town centre
const roofs = [[165, 22, 14, 14], [224, 26, 24, 12], [143, 97, 20, 12], [132, 131, 9, 16], [165, 135, 35, 30], [190, 180, 24, 18], [160, 200, 24, 14], [80, 70, 8, 10], [98, 50, 16, 14], [288, 288, 16, 24], [290, 320, 20, 20], [45, 105, 16, 12], [54, 145, 14, 10]];
for (const [x, y, w, h] of roofs) for (let k = 0; k < w * h / 10; k++) {
  ctx.fillStyle = ['#e8f3ff', '#8fafd8', '#a9a0cf', '#20242e'][k % 4];
  ctx.fillRect(x + rnd() * w, y + rnd() * h, 1 + rnd() * 2, 1 + rnd() * 1.5);
}
// Sensor grain; bright roofs are broken up by shadowed gaps
const shot = ctx.getImageData(0, 0, size, size);
for (let o = 0; o < shot.data.length; o += 4) {
  const p = shot.data;
  let f = 0.86 + rnd() * 0.28;
  if (p[o + 2] > 200 && p[o + 2] - p[o] > 20 && rnd() < 0.2) f = 0.45;
  else if (p[o + 2] > 200 && p[o + 2] - p[o] > 20) f = 0.95 + rnd() * 0.3;
  p[o] *= f; p[o + 1] *= f; p[o + 2] *= f;
}
ctx.putImageData(shot, 0, 0);
```
